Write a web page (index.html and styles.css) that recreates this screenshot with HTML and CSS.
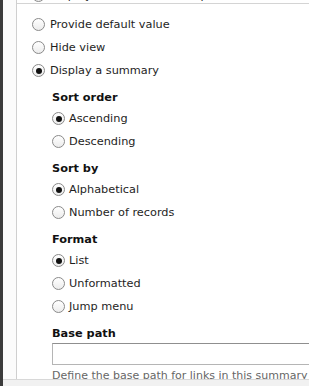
FILE: index.html
```html
<!DOCTYPE html>
<html lang="en">
    <head>
        <meta charset="UTF-8">
        <title>Argument options</title>
        <link rel="stylesheet" href="styles.css">
    </head>
    <body>
        <div class="stripe"></div>
        <div class="panel">
            <div class="scroll">
                <div class="gutter"></div>
                <form class="options">
                    <div class="clipped">
                        <label class="radio"><input type="radio" name="default"> Display all results for the specified field</label>
                    </div>
                    <label class="radio"><input type="radio" name="default"> Provide default value</label>
                    <label class="radio"><input type="radio" name="default"> Hide view</label>
                    <label class="radio"><input type="radio" name="default" checked> Display a summary</label>

                    <div class="group">
                        <h4>Sort order</h4>
                        <label class="radio"><input type="radio" name="order" checked> Ascending</label>
                        <label class="radio"><input type="radio" name="order"> Descending</label>

                        <h4>Sort by</h4>
                        <label class="radio"><input type="radio" name="sort" checked> Alphabetical</label>
                        <label class="radio"><input type="radio" name="sort"> Number of records</label>

                        <h4>Format</h4>
                        <label class="radio"><input type="radio" name="format" checked> List</label>
                        <label class="radio"><input type="radio" name="format"> Unformatted</label>
                        <label class="radio"><input type="radio" name="format"> Jump menu</label>

                        <h4>Base path</h4>
                        <input class="text" type="text">
                        <p class="desc">Define the base path for links in this summary view.</p>
                    </div>
                </form>
            </div>
            <div class="footer"></div>
        </div>
    </body>
</html>
```

FILE: styles.css
```css
* {
    box-sizing: border-box;
}

html, body {
    margin: 0;
    height: 100vh;
    overflow: hidden;
}

body {
    display: flex;
    background: #fff;
    font-family: "DejaVu Sans", sans-serif;
    font-size: 11.3px;
    color: #1e1e1e;
}

.stripe {
    width: 3px;
    background: #3b3b3b;
}

.panel {
    flex: 1;
    display: flex;
    flex-direction: column;
    min-width: 0;
}

.scroll {
    flex: 1;
    display: flex;
    overflow: hidden;
    min-height: 0;
}

.gutter {
    width: 14px;
    border-right: 1px solid #cfcfcf;
    background: #fbfbfb;
}

.options {
    flex: 1;
    display: flex;
    flex-direction: column;
    padding: 0 0 0 15px;
    min-width: 0;
}

.options > *,
.group > * {
    flex-shrink: 0;
}

.clipped {
    height: 4px;
    overflow: hidden;
    border-bottom: 1px solid #d4d4d4;
    margin: 0 0 9px -15px;
    padding-left: 15px;
}

.clipped .radio {
    margin-top: -16px;
}

.radio {
    display: flex;
    align-items: center;
    height: 23px;
    white-space: nowrap;
    gap: 5px;
}

.radio input {
    appearance: none;
    margin: 0;
    width: 13px;
    height: 13px;
    border: 1px solid #8a8a8a;
    border-radius: 50%;
    background: linear-gradient(#fff, #ececec);
    display: flex;
    align-items: center;
    justify-content: center;
    flex: none;
}

.radio input:checked::after {
    content: "";
    width: 6px;
    height: 6px;
    border-radius: 50%;
    background: #111;
}

.group {
    display: flex;
    flex-direction: column;
    padding-left: 20px;
}

.group .radio {
    gap: 4px;
}

h4 {
    margin: 6px 0 0;
    height: 19px;
    line-height: 19px;
    font-size: 11.3px;
    font-weight: bold;
    color: #111;
}

.text {
    margin: 0;
    width: 300px;
    height: 22px;
    border: 1px solid #b5b5b5;
    border-top-color: #8f8f8f;
    background: #fff;
}

.desc {
    margin: 3px 0 0;
    font-size: 11px;
    line-height: 16px;
    color: #666;
    white-space: nowrap;
}

.footer {
    height: 7px;
    background: #f1f1f1;
    border-top: 1px solid #d8d8d8;
}
```
